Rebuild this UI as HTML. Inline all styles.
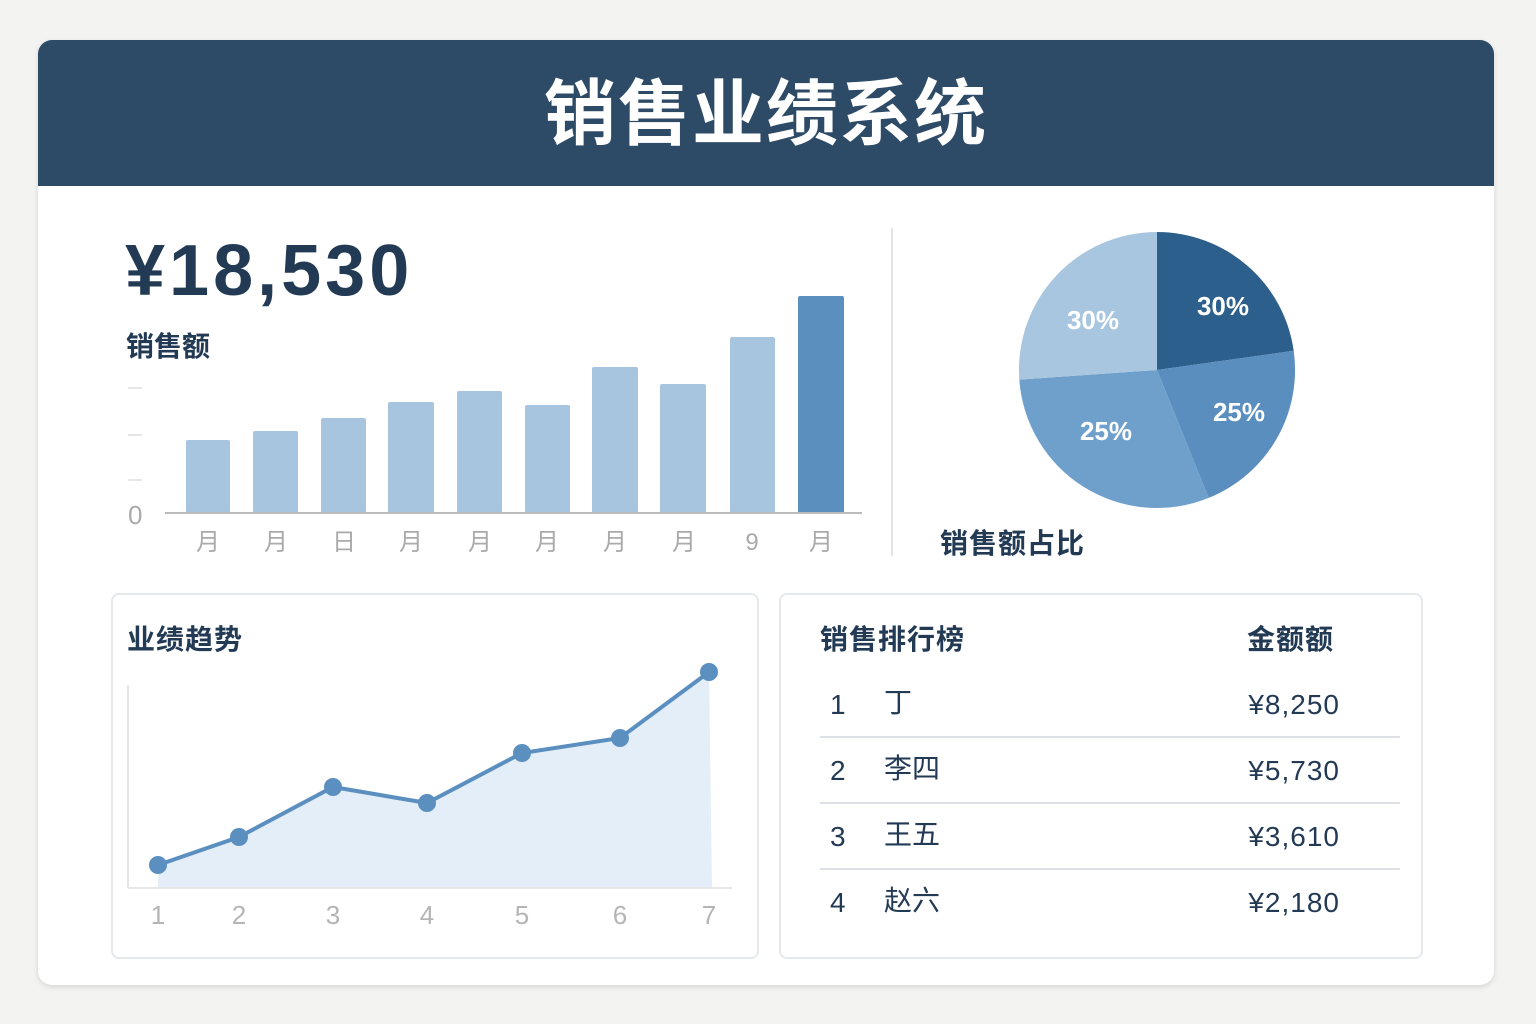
<!DOCTYPE html>
<html><head><meta charset="utf-8"><style>
body{margin:0;width:1536px;height:1024px;background:#f3f3f1;font-family:"Liberation Sans","Noto Sans CJK SC",sans-serif;position:relative;overflow:hidden}
.card{position:absolute;left:38px;top:40px;width:1456px;height:945px;background:#fff;border-radius:14px;box-shadow:0 2px 6px rgba(0,0,0,.12);overflow:hidden}
.hdr{position:absolute;left:0;top:0;width:100%;height:146px;background:#2d4a66;color:#fff;font-size:72px;font-weight:bold;text-align:center;line-height:150px;letter-spacing:2px}
.t{position:absolute;white-space:nowrap;line-height:1.2}
.panel{position:absolute;border:2px solid #e6e9ec;border-radius:8px;background:#fff}
.r{font-size:28px;color:#233a55}
.amt{left:1230px;width:110px;text-align:right;letter-spacing:1px}
</style></head><body>
<div class="card"><div class="hdr">销售业绩系统</div></div>
<div class="t" style="left:125px;top:228px;font-size:72px;font-weight:bold;color:#233a55;letter-spacing:4px">¥18,530</div>
<div class="t" style="left:126px;top:330px;font-size:28px;font-weight:bold;color:#233a55">销售额</div>
<svg style="position:absolute;left:0;top:0" width="1536" height="1024">
<g stroke="#ddd" stroke-width="1.5"><line x1="128" y1="388" x2="142" y2="388"/><line x1="128" y1="435" x2="142" y2="435"/><line x1="128" y1="480" x2="142" y2="480"/></g>
<g fill="#a7c5de">
<rect x="186" y="440" width="44" height="73" rx="2"/><rect x="253" y="431" width="45" height="82" rx="2"/>
<rect x="321" y="418" width="45" height="95" rx="2"/><rect x="388" y="402" width="46" height="111" rx="2"/>
<rect x="457" y="391" width="45" height="122" rx="2"/><rect x="525" y="405" width="45" height="108" rx="2"/>
<rect x="592" y="367" width="46" height="146" rx="2"/><rect x="660" y="384" width="46" height="129" rx="2"/>
<rect x="730" y="337" width="45" height="176" rx="2"/></g>
<rect x="798" y="296" width="46" height="217" rx="2" fill="#5b8fbe"/>
<line x1="165" y1="513" x2="862" y2="513" stroke="#bbb" stroke-width="2"/>
<text x="128" y="524" font-size="26" fill="#aaa">0</text>
<g font-size="24" fill="#aaa" text-anchor="middle" font-family="Liberation Sans,Noto Sans CJK SC,sans-serif">
<text x="208" y="550">月</text><text x="276" y="550">月</text><text x="344" y="550">日</text><text x="411" y="550">月</text><text x="480" y="550">月</text><text x="547" y="550">月</text><text x="615" y="550">月</text><text x="684" y="550">月</text><text x="752" y="550">9</text><text x="821" y="550">月</text></g>
<line x1="892" y1="228" x2="892" y2="556" stroke="#e3e6e9" stroke-width="2"/>
<path d="M1157 370 L1157 232 A138 138 0 0 1 1293.7 350.8Z" fill="#2d5f8c"/>
<path d="M1157 370 L1293.7 350.8 A138 138 0 0 1 1208.7 497.9Z" fill="#5a8ebf"/>
<path d="M1157 370 L1208.7 497.9 A138 138 0 0 1 1019.3 379.6Z" fill="#6fa0cc"/>
<path d="M1157 370 L1019.3 379.6 A138 138 0 0 1 1157 232Z" fill="#a8c6e0"/>
<g font-size="26" font-weight="bold" fill="#fff" text-anchor="middle">
<text x="1223" y="315">30%</text><text x="1093" y="329">30%</text><text x="1239" y="421">25%</text><text x="1106" y="440">25%</text></g>
</svg>
<div class="t" style="left:940px;top:527px;font-size:28px;font-weight:bold;color:#233a55;letter-spacing:1px">销售额占比</div>
<div class="panel" style="left:111px;top:593px;width:644px;height:362px"></div>
<div class="panel" style="left:779px;top:593px;width:640px;height:362px"></div>
<div class="t" style="left:127px;top:623px;font-size:28px;font-weight:bold;color:#233a55;letter-spacing:1px">业绩趋势</div>
<svg style="position:absolute;left:0;top:0" width="1536" height="1024">
<path d="M158 865 L239 837 L333 787 L427 803 L522 753 L620 738 L709 672 L712 888 L158 888Z" fill="#e3eef8"/>
<line x1="128" y1="685" x2="128" y2="888" stroke="#e6e6e6" stroke-width="2"/>
<line x1="128" y1="888" x2="732" y2="888" stroke="#e6e6e6" stroke-width="2"/>
<polyline points="158,865 239,837 333,787 427,803 522,753 620,738 709,672" fill="none" stroke="#5b8fc0" stroke-width="4"/>
<g fill="#5b8fc0"><circle cx="158" cy="865" r="9"/><circle cx="239" cy="837" r="9"/><circle cx="333" cy="787" r="9"/><circle cx="427" cy="803" r="9"/><circle cx="522" cy="753" r="9"/><circle cx="620" cy="738" r="9"/><circle cx="709" cy="672" r="9"/></g>
<g font-size="26" fill="#b5b5b5" text-anchor="middle"><text x="158" y="924">1</text><text x="239" y="924">2</text><text x="333" y="924">3</text><text x="427" y="924">4</text><text x="522" y="924">5</text><text x="620" y="924">6</text><text x="709" y="924">7</text></g>
<g stroke="#dde1e5" stroke-width="2"><line x1="820" y1="737" x2="1400" y2="737"/><line x1="820" y1="803" x2="1400" y2="803"/><line x1="820" y1="869" x2="1400" y2="869"/></g>
</svg>
<div class="t" style="left:820px;top:623px;font-size:28px;font-weight:bold;color:#233a55;letter-spacing:1px">销售排行榜</div>
<div class="t" style="left:1247px;top:623px;font-size:28px;font-weight:bold;color:#233a55;letter-spacing:1px">金额额</div>
<div class="t r" style="left:830px;top:688px">1</div><div class="t r" style="left:884px;top:686px">丁</div><div class="t r amt" style="top:688px">¥8,250</div>
<div class="t r" style="left:830px;top:754px">2</div><div class="t r" style="left:884px;top:752px">李四</div><div class="t r amt" style="top:754px">¥5,730</div>
<div class="t r" style="left:830px;top:820px">3</div><div class="t r" style="left:884px;top:818px">王五</div><div class="t r amt" style="top:820px">¥3,610</div>
<div class="t r" style="left:830px;top:886px">4</div><div class="t r" style="left:884px;top:884px">赵六</div><div class="t r amt" style="top:886px">¥2,180</div>
</body></html>
